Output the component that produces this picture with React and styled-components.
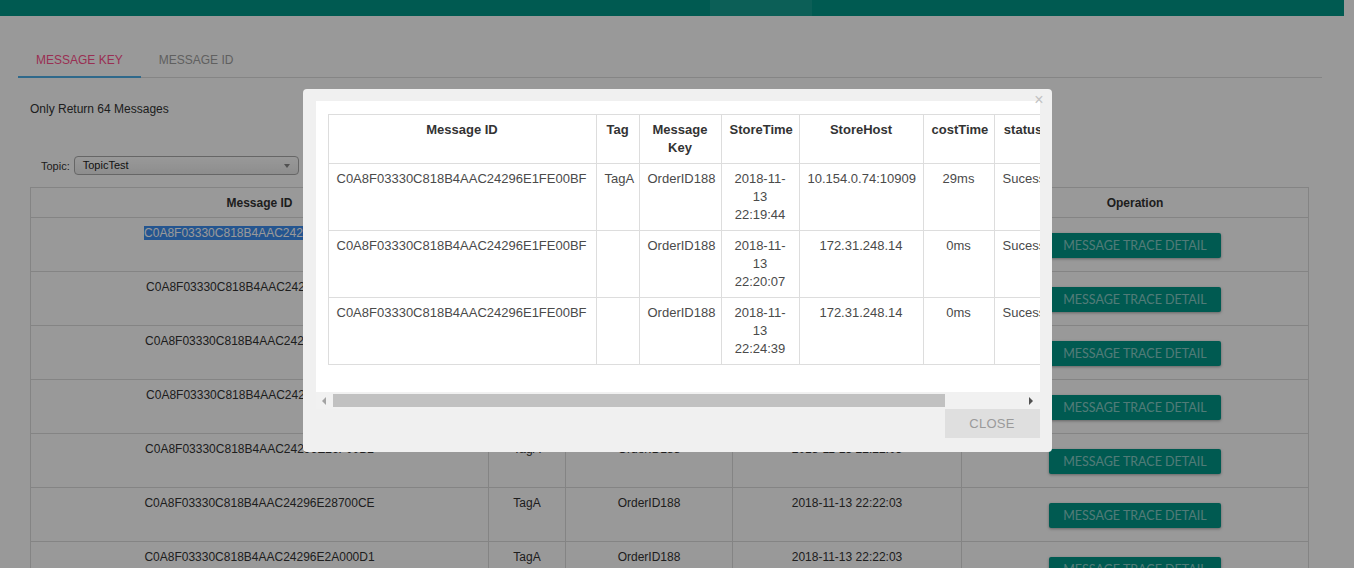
import React from 'react';
import styled, { createGlobalStyle } from 'styled-components';

const GlobalStyle = createGlobalStyle`
  html, body {
    margin: 0;
    padding: 0;
  }
  body {
    font-family: "Liberation Sans", Arial, sans-serif;
    background: #fff;
    color: #333;
    overflow: hidden;
  }
  * {
    box-sizing: border-box;
  }
`;

const Page = styled.div`
  height: 568px;
  overflow: hidden;
`;

const TopBar = styled.div`
  height: 16px;
  margin-right: 10px;
  background: #009688;
  display: flex;
`;

const NavHighlight = styled.div`
  margin-left: 710px;
  width: 102px;
  background: rgba(255, 255, 255, 0.08);
`;

const Content = styled.div`
  padding: 28px 32px 0 18px;
`;

const TabBar = styled.div`
  display: flex;
  border-bottom: 1px solid #dedede;
`;

const Tab = styled.div`
  height: 34px;
  line-height: 33px;
  padding: 0 18px;
  font-size: 12px;
  margin-bottom: -1px;
  color: ${(p) => (p.$active ? '#ff4f8b' : '#a0a0a0')};
  border-bottom: 2px solid ${(p) => (p.$active ? '#4fb0e8' : 'transparent')};
`;

const Info = styled.div`
  margin: 24px 0 0 12px;
  font-size: 12px;
  color: #333;
`;

const TopicRow = styled.div`
  display: flex;
  align-items: center;
  gap: 4px;
  margin: 40px 0 0 23px;
  font-size: 11px;
  color: #333;
`;

const TopicSelect = styled.div`
  position: relative;
  width: 225px;
  height: 19px;
  line-height: 17px;
  padding-left: 8px;
  border: 1px solid #aaa;
  border-radius: 4px;
  background: linear-gradient(#fff, #ececec);
  color: #222;
  &::after {
    content: '';
    position: absolute;
    right: 8px;
    top: 7px;
    border-left: 3px solid transparent;
    border-right: 3px solid transparent;
    border-top: 4px solid #888;
  }
`;

const Col = styled.col`
  width: ${(p) => p.$w}px;
`;

const BgTable = styled.table`
  margin: 12px 0 0 12px;
  width: 1278px;
  border-collapse: collapse;
  table-layout: fixed;
  font-size: 12px;
  color: #333;
  th {
    height: 30px;
    border: 1px solid #ddd;
    font-weight: bold;
    text-align: center;
  }
  td {
    height: 54px;
    border: 1px solid #ddd;
    padding: 7px 8px 6px;
    line-height: 16px;
    vertical-align: top;
    text-align: center;
    white-space: nowrap;
  }
`;

const Selected = styled.span`
  background: #3d8ef0;
  color: #fff;
`;

const TraceButton = styled.button`
  margin-top: 8px;
  width: 172px;
  height: 25px;
  border: none;
  border-radius: 2px;
  background: #009688;
  color: rgba(255, 255, 255, 0.55);
  font-family: Lato, "Open Sans", sans-serif;
  font-size: 12.5px;
  box-shadow: 0 1px 3px rgba(0, 0, 0, 0.35);
  padding: 0;
`;

const Overlay = styled.div`
  position: fixed;
  inset: 0;
  background: rgba(0, 0, 0, 0.4);
  display: flex;
  justify-content: center;
  align-items: flex-start;
  padding-top: 89px;
`;

const Modal = styled.div`
  position: relative;
  width: 749px;
  background: #f0f0f0;
  border-radius: 4px;
  padding: 12px 12px 14px 13px;
`;

const CloseX = styled.span`
  position: absolute;
  top: 3px;
  right: 8px;
  font-size: 16px;
  line-height: 1;
  color: #c2c2c2;
`;

const ScrollArea = styled.div`
  height: 291px;
  background: #fff;
  overflow: hidden;
  padding: 13px 0 0 12px;
`;

const DetailTable = styled.table`
  width: 794px;
  border-collapse: collapse;
  table-layout: fixed;
  font-size: 13px;
  th, td {
    border: 1px solid #ddd;
    padding: 6px 8px;
    line-height: 18px;
    vertical-align: top;
    text-align: center;
  }
  th {
    font-weight: bold;
    color: #333;
  }
  td {
    color: #4a4a4a;
  }
  td:first-child {
    text-align: left;
  }
`;

const ScrollBar = styled.div`
  display: flex;
  align-items: center;
  height: 17px;
  background: #f1f1f1;
`;

const Arrow = styled.div`
  width: 17px;
  height: 17px;
  display: flex;
  align-items: center;
  justify-content: center;
  &::before {
    content: '';
    border-top: 4px solid transparent;
    border-bottom: 4px solid transparent;
    ${(p) =>
      p.$dir === 'left'
        ? 'border-right: 4px solid #a3a3a3;'
        : 'border-left: 4px solid #505050;'}
  }
`;

const Track = styled.div`
  flex: 1;
  height: 13px;
`;

const Thumb = styled.div`
  width: 612px;
  height: 13px;
  background: #c1c1c1;
`;

const Footer = styled.div`
  display: flex;
  justify-content: flex-end;
`;

const CloseButton = styled.button`
  width: 95px;
  height: 29px;
  border: none;
  background: #dfdfdf;
  color: #9a9a9a;
  font-family: "Liberation Sans", Arial, sans-serif;
  font-size: 13px;
  letter-spacing: 0.3px;
  padding: 0;
`;

const bgCols = [458, 77, 167, 229, 347];
const detailCols = [268, 43, 82, 78, 124, 71, 58, 70];

const bgRows = [
  'C0A8F03330C818B4AAC24296E1FE00BF',
  'C0A8F03330C818B4AAC24296E2160020',
  'C0A8F03330C818B4AAC24296E23D0050',
  'C0A8F03330C818B4AAC24296E2570080',
  'C0A8F03330C818B4AAC24296E26F00B2',
  'C0A8F03330C818B4AAC24296E28700CE',
  'C0A8F03330C818B4AAC24296E2A000D1',
];

const traces = [
  { tag: 'TagA', time: '2018-11-13 22:19:44', host: '10.154.0.74:10909', cost: '29ms', type: 'Pub' },
  { tag: '', time: '2018-11-13 22:20:07', host: '172.31.248.14', cost: '0ms', type: 'SubBefore' },
  { tag: '', time: '2018-11-13 22:24:39', host: '172.31.248.14', cost: '0ms', type: 'SubAfter' },
];

export default function App() {
  return (
    <>
      <GlobalStyle />
      <Page>
        <TopBar>
          <NavHighlight />
        </TopBar>
        <Content>
          <TabBar>
            <Tab $active>MESSAGE KEY</Tab>
            <Tab>MESSAGE ID</Tab>
          </TabBar>
          <Info>Only Return 64 Messages</Info>
          <TopicRow>
            <span>Topic:</span>
            <TopicSelect>TopicTest</TopicSelect>
          </TopicRow>
          <BgTable>
            <colgroup>
              {bgCols.map((w, i) => (
                <Col key={i} $w={w} />
              ))}
            </colgroup>
            <thead>
              <tr>
                <th>Message ID</th>
                <th>Tag</th>
                <th>Message Key</th>
                <th>StoreTime</th>
                <th>Operation</th>
              </tr>
            </thead>
            <tbody>
              {bgRows.map((id, i) => (
                <tr key={id}>
                  <td>{i === 0 ? <Selected>{id}</Selected> : id}</td>
                  <td>TagA</td>
                  <td>OrderID188</td>
                  <td>2018-11-13 22:22:03</td>
                  <td>
                    <TraceButton>MESSAGE TRACE DETAIL</TraceButton>
                  </td>
                </tr>
              ))}
            </tbody>
          </BgTable>
        </Content>
      </Page>
      <Overlay>
        <Modal>
          <CloseX>×</CloseX>
          <ScrollArea>
            <DetailTable>
              <colgroup>
                {detailCols.map((w, i) => (
                  <Col key={i} $w={w} />
                ))}
              </colgroup>
              <thead>
                <tr>
                  <th>Message ID</th>
                  <th>Tag</th>
                  <th>Message Key</th>
                  <th>StoreTime</th>
                  <th>StoreHost</th>
                  <th>costTime</th>
                  <th>status</th>
                  <th>traceType</th>
                </tr>
              </thead>
              <tbody>
                {traces.map((t) => (
                  <tr key={t.type}>
                    <td>C0A8F03330C818B4AAC24296E1FE00BF</td>
                    <td>{t.tag}</td>
                    <td>OrderID188</td>
                    <td>{t.time}</td>
                    <td>{t.host}</td>
                    <td>{t.cost}</td>
                    <td>Sucess</td>
                    <td>{t.type}</td>
                  </tr>
                ))}
              </tbody>
            </DetailTable>
          </ScrollArea>
          <ScrollBar>
            <Arrow $dir="left" />
            <Track>
              <Thumb />
            </Track>
            <Arrow $dir="right" />
          </ScrollBar>
          <Footer>
            <CloseButton>CLOSE</CloseButton>
          </Footer>
        </Modal>
      </Overlay>
    </>
  );
}
